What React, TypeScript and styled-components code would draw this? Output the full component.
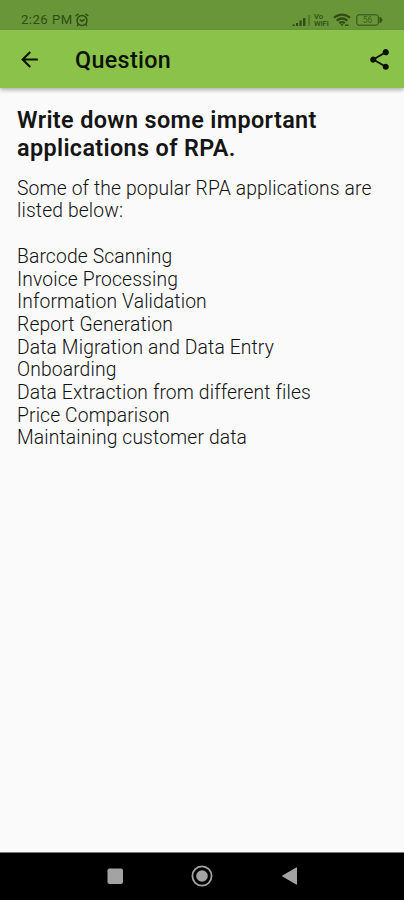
import React from 'react';
import styled, { createGlobalStyle } from 'styled-components';

const GlobalStyle = createGlobalStyle`
  * { box-sizing: border-box; }
  body { margin: 0; background: #fafafa; font-family: Roboto, "Noto Sans", sans-serif; }
`;

const Screen = styled.div`
  display: flex;
  flex-direction: column;
  height: 900px;
  width: 100%;
  overflow: hidden;
  background: #fafafa;
`;

const StatusBar = styled.div`
  height: 30px;
  flex: none;
  display: flex;
  align-items: center;
  justify-content: space-between;
  padding: 10px 21px 0;
  background: #689639;
  color: #2f4d14;
`;

const Clock = styled.span`
  font-size: 13.2px;
  line-height: 20px;
  letter-spacing: 0.45px;
`;

const StatusGroup = styled.div<{ $gap: number }>`
  display: flex;
  align-items: center;
  height: 20px;
  gap: ${({ $gap }) => $gap}px;
`;

const Carrier = styled.div`
  display: flex;
  flex-direction: column;
  width: 16px;
  font-size: 7.6px;
  line-height: 7.5px;
  font-weight: 500;
`;

const AppBar = styled.header`
  height: 58px;
  flex: none;
  display: flex;
  align-items: center;
  padding: 0 12px 0 17px;
  background: #8bc34a;
  color: #0c1206;
  box-shadow: 0 2px 4px rgba(0, 0, 0, 0.3);
  z-index: 1;
`;

const BarTitle = styled.h1`
  flex: 1;
  margin: 2px 0 0 33px;
  font-size: 23.3px;
  line-height: 30px;
  font-weight: 500;
  letter-spacing: 0.35px;
`;

const Content = styled.main`
  flex: 1;
  padding: 18px 16px 0 17px;
`;

const Heading = styled.h2`
  margin: 0;
  font-size: 23.4px;
  line-height: 28px;
  font-weight: 600;
  letter-spacing: 0.36px;
  color: #151515;
`;

const Answer = styled.div`
  margin-top: 15.8px;
  font-size: 19.3px;
  line-height: 22.68px;
  font-weight: 300;
  letter-spacing: 0.13px;
  color: #111;
`;

const Paragraph = styled.p`
  margin: 0 0 22.68px;
`;

const List = styled.ul`
  margin: 0;
  padding: 0;
  list-style: none;
`;

const NavBar = styled.nav`
  height: 48px;
  flex: none;
  display: flex;
  align-items: center;
  justify-content: space-between;
  padding: 0 106px 2px;
  background: #000;
  border-top: 1px solid #777;
`;

const applications = [
  'Barcode Scanning',
  'Invoice Processing',
  'Information Validation',
  'Report Generation',
  'Data Migration and Data Entry',
  'Onboarding',
  'Data Extraction from different files',
  'Price Comparison',
  'Maintaining customer data',
];

const AlarmIcon = () => (
  <svg width="14" height="14" viewBox="0 0 14 14" fill="none" stroke="currentColor" strokeWidth="1.5">
    <circle cx="7" cy="7.5" r="5" />
    <path d="M.7 3 3.5.8M13.3 3 10.5.8M4.7 6.5 7 8.3l2.5-2M3.2 11.5 2 13M10.8 11.5 12 13" />
  </svg>
);

const SignalIcon = () => (
  <svg width="19" height="13" viewBox="0 0 19 13" fill="currentColor">
    <path d="M.5 10.5h2.2V12H.5zM4 9h2.2v3H4zM7.5 6.5h2.2V12H7.5zM11 4h2.4v8H11z" />
    <path d="M16.5 1h1.2v11h-1.2z" opacity=".65" />
  </svg>
);

const WifiIcon = () => (
  <svg width="18" height="14" viewBox="0 0 18 14" fill="none" stroke="currentColor" strokeWidth="2.2">
    <path d="M1 4.6Q9-1.2 17 4.6M3.6 7.6Q9 3.4 14.4 7.6M6.2 10.2Q9 8 11.8 10.2" />
    <path d="m7.3 11.2 1.7 2 1.7-2z" fill="currentColor" stroke="none" />
    <path d="M12 12.2h3.5" strokeWidth="1.5" />
  </svg>
);

const BatteryGlyph = styled.svg`
  margin-left: 2px;
`;

const BatteryIcon = () => (
  <BatteryGlyph width="27" height="12" viewBox="0 0 27 12" fill="none" stroke="currentColor">
    <rect x=".8" y=".8" width="21.5" height="10.4" rx="2" />
    <path d="M24 3.2 26.2 6 24 8.8z" fill="currentColor" />
    <text x="11.5" y="9" textAnchor="middle" fontSize="8.5" fill="currentColor" stroke="none" opacity=".7">56</text>
  </BatteryGlyph>
);

const BackIcon = () => (
  <svg width="25" height="25" viewBox="0 0 24 24" fill="currentColor">
    <path d="M20 11H7.83l5.59-5.59L12 4l-8 8 8 8 1.41-1.41L7.83 13H20z" />
  </svg>
);

const ShareIcon = () => (
  <svg width="25" height="25" viewBox="0 0 24 24" fill="currentColor">
    <path d="M18 16.08c-.76 0-1.44.3-1.96.77L8.91 12.7c.05-.23.09-.46.09-.7s-.04-.47-.09-.7l7.05-4.11c.54.5 1.25.81 2.04.81 1.66 0 3-1.34 3-3s-1.34-3-3-3-3 1.34-3 3c0 .24.04.47.09.7L8.04 9.81C7.5 9.31 6.79 9 6 9c-1.66 0-3 1.34-3 3s1.34 3 3 3c.79 0 1.5-.31 2.04-.81l7.12 4.16c-.05.21-.08.43-.08.65 0 1.61 1.31 2.92 2.92 2.92s2.92-1.31 2.92-2.92-1.31-2.92-2.92-2.92z" />
  </svg>
);

const RecentsIcon = () => (
  <svg width="18" height="24" viewBox="0 0 18 24">
    <rect x="1.5" y="4.5" width="15.5" height="15.5" rx="2" fill="#a3a3a3" />
  </svg>
);

const HomeIcon = () => (
  <svg width="24" height="24" viewBox="0 0 24 24">
    <circle cx="12" cy="12" r="9.6" fill="none" stroke="#a3a3a3" strokeWidth="1.8" />
    <circle cx="12" cy="12" r="5.8" fill="#a3a3a3" />
  </svg>
);

const NavBackIcon = () => (
  <svg width="18" height="24" viewBox="0 0 18 24">
    <path d="M16.5 3.8v16.4L2.5 12z" fill="#a3a3a3" stroke="#a3a3a3" strokeLinejoin="round" />
  </svg>
);

export default function App() {
  return (
    <Screen>
      <GlobalStyle />
      <StatusBar>
        <StatusGroup $gap={2}>
          <Clock>2:26 PM</Clock>
          <AlarmIcon />
        </StatusGroup>
        <StatusGroup $gap={3}>
          <SignalIcon />
          <Carrier>
            <span>Vo</span>
            <span>WiFi</span>
          </Carrier>
          <WifiIcon />
          <BatteryIcon />
        </StatusGroup>
      </StatusBar>
      <AppBar>
        <BackIcon />
        <BarTitle>Question</BarTitle>
        <ShareIcon />
      </AppBar>
      <Content>
        <Heading>Write down some important applications of RPA.</Heading>
        <Answer>
          <Paragraph>Some of the popular RPA applications are listed below:</Paragraph>
          <List>
            {applications.map((name) => (
              <li key={name}>{name}</li>
            ))}
          </List>
        </Answer>
      </Content>
      <NavBar>
        <RecentsIcon />
        <HomeIcon />
        <NavBackIcon />
      </NavBar>
    </Screen>
  );
}
